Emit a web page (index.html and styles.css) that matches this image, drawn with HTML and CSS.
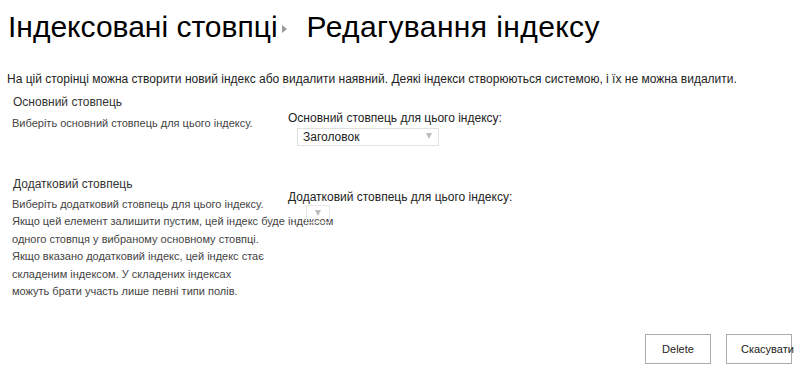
FILE: index.html
```html
<!DOCTYPE html>
<html lang="uk">
<head>
    <meta charset="UTF-8">
    <title>Редагування індексу</title>
    <link rel="stylesheet" href="styles.css">
</head>
<body>
    <!-- заголовок сторінки -->
    <div class="page-title">
        <span class="crumb">Індексовані стовпці</span>
        <span class="crumb-sep"></span>
        <span class="crumb current">Редагування індексу</span>
    </div>

    <div class="page-desc">На цій сторінці можна створити новий індекс або видалити наявний. Деякі індекси створюються системою, і їх не можна видалити.</div>

    <!-- основний стовпець -->
    <div class="section section-primary">
        <div class="section-left">
            <div class="section-head">Основний стовпець</div>
            <div class="section-text">Виберіть основний стовпець для цього індексу.</div>
        </div>
        <div class="section-right">
            <div class="field-label">Основний стовпець для цього індексу:</div>
            <div class="select select-wide">
                <span class="select-value">Заголовок</span>
                <span class="select-arrow"></span>
            </div>
        </div>
    </div>

    <!-- додатковий стовпець -->
    <div class="section section-secondary">
        <div class="section-left">
            <div class="section-head">Додатковий стовпець</div>
            <div class="section-text">Виберіть додатковий стовпець для цього індексу.<br>Якщо цей елемент залишити пустим, цей індекс буде індексом<br>одного стовпця у вибраному основному стовпці.<br>Якщо вказано додатковий індекс, цей індекс стає<br>складеним індексом. У складених індексах<br>можуть брати участь лише певні типи полів.</div>
        </div>
        <div class="section-right">
            <div class="field-label">Додатковий стовпець для цього індексу:</div>
            <div class="select select-narrow">
                <span class="select-arrow"></span>
            </div>
        </div>
    </div>

    <div class="buttons">
        <button class="btn">Delete</button>
        <button class="btn btn-cancel">Скасувати</button>
    </div>
</body>
</html>
```

FILE: styles.css
```css
* {
    margin: 0;
    padding: 0;
    box-sizing: border-box;
}

body {
    font-family: "Liberation Sans", Arial, sans-serif;
    background-color: #fff;
    color: #333;
    width: 800px;
    height: 378px;
    overflow: hidden;
}

/* заголовок */
.page-title {
    display: flex;
    align-items: center;
    padding: 9px 0 0 8px;
    height: 45px;
    font-size: 30px;
    color: #000;
    line-height: 32px;
}

.crumb.current {
    letter-spacing: 0.4px;
}

.crumb-sep {
    width: 0;
    height: 0;
    border-top: 4px solid transparent;
    border-bottom: 4px solid transparent;
    border-left: 5px solid #9a9a9a;
    margin: 4px 20px 0 4px;
}

.page-desc {
    padding: 26px 0 0 7px;
    font-size: 12px;
    color: #222;
    line-height: 16px;
}

/* секції */
.section {
    display: flex;
}

.section-left {
    width: 288px;
    flex-shrink: 0;
    padding-left: 12px;
    white-space: nowrap;
}

.section-head {
    font-size: 12px;
    line-height: 16px;
    color: #333;
    padding-left: 1px;
}

.section-text {
    font-size: 11px;
    color: #444;
    line-height: 17.4px;
}

.section-primary {
    padding-top: 7px;
    height: 89px;
}

.section-primary .section-text {
    margin-top: 5px;
}

.section-primary .section-right {
    padding-top: 16px;
}

.section-secondary .section-text {
    margin-top: 4px;
}

.section-secondary .section-right {
    padding-top: 13px;
}

.field-label {
    font-size: 12px;
    line-height: 16px;
    color: #222;
}

/* випадаючі списки */
.select {
    position: relative;
    border: 1px solid #e1e1e1;
    height: 18px;
    font-size: 12px;
    color: #222;
    line-height: 16px;
}

.select-wide {
    width: 142px;
    margin: 2px 0 0 9px;
}

.select-value {
    padding-left: 5px;
}

.select-narrow {
    width: 24px;
    margin: 0 0 0 18px;
    border-color: #e8e8e8;
}

.select-arrow {
    position: absolute;
    right: 6px;
    top: 4px;
    width: 0;
    height: 0;
    border-left: 3px solid transparent;
    border-right: 3px solid transparent;
    border-top: 6px solid #bdbdbd;
}

.select-narrow .select-arrow {
    right: 8px;
}

/* кнопки */
.buttons {
    display: flex;
    justify-content: flex-end;
    gap: 15px;
    padding: 0 8px 0 0;
    margin-top: 34px;
}

.btn {
    width: 66px;
    height: 30px;
    background-color: #fff;
    border: 1px solid #ababab;
    font-family: "Liberation Sans", Arial, sans-serif;
    font-size: 11px;
    color: #222;
    padding: 0 6px;
    white-space: nowrap;
}

.btn-cancel {
    padding-left: 14px;
    text-align: left;
}
```
